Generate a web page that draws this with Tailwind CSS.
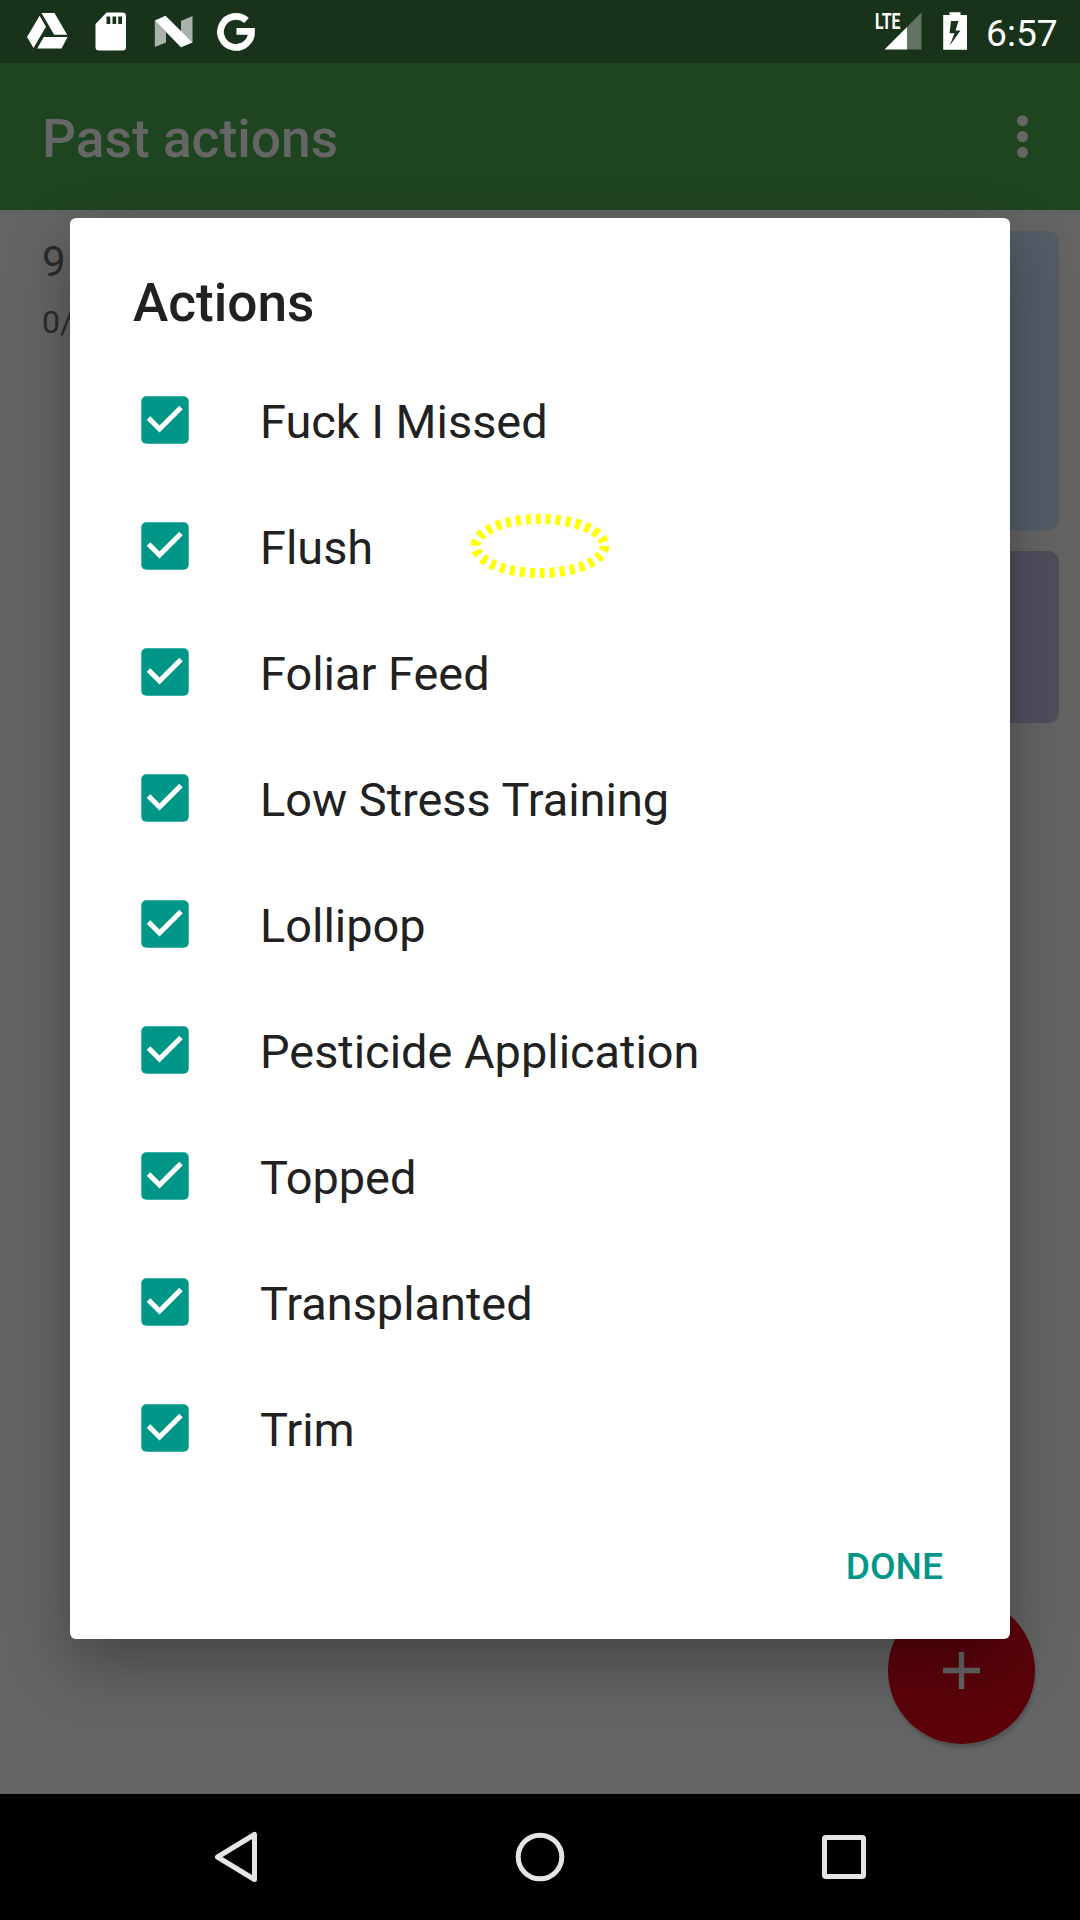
<!DOCTYPE html>
<html lang="en">
<head>
<meta charset="utf-8">
<title>Past actions</title>
<script src="https://cdn.jsdelivr.net/npm/@tailwindcss/browser@4"></script>
</head>
<body class="font-[Roboto,sans-serif]">
<div class="relative flex h-[1920px] w-[1080px] flex-col overflow-hidden bg-[#646464]">
  <!-- Status bar -->
  <header class="flex h-[63px] shrink-0 items-start justify-between bg-[#19321a] text-white">
    <svg class="h-[63px] w-[300px]" viewBox="0 0 300 63" fill="#fff">
      <path d="M41.5 13H54.5L67.2 34.7H54.2ZM39.6 15.7L46 26.7 33.5 48 27 37ZM43.8 37H67.6L61.5 48.4H37.2Z"/>
      <path fill-rule="evenodd" d="M106.500 12.500H122.500Q126 12.500 126 16V47Q126 50.500 122.500 50.500H99Q95.500 50.500 95.500 47V24ZM106.500 16.500V24H110.300V16.500ZM112.500 16.500V24H116.200V16.500ZM118.200 16.500V24H122V16.500Z"/>
      <path opacity=".63" d="M154.800 20.500L166 32V42.500L154.800 47ZM181 21L192.500 16V42.500L181 32Z"/>
      <path d="M154.800 20.500L165.500 15.700 192.500 42.500 181 47.200Z"/>
      <path fill="none" stroke="#fff" stroke-width="6.800" d="M246.500 20.500A15.500 15.500 0 1 0 251.500 31.300H236.500"/>
    </svg>
    <div class="flex">
      <svg class="h-[63px] w-[130px]" viewBox="860 0 130 63" fill="#fff">
        <text x="875" y="29" font-family="Roboto, sans-serif" font-size="22.500" font-weight="700" textLength="25.500" lengthAdjust="spacingAndGlyphs">LTE</text>
        <path d="M884.500 49.500L907 27V49.500Z"/>
        <path opacity=".32" d="M907 27L921.500 12.500V49.500H907Z"/>
        <path fill-rule="evenodd" d="M943.200 15H949.500V12.200H960.500V15H967V49.700H943.200ZM951 21L949.500 33.300H954.500L949.800 45.500 960.500 30.500H955.500L958.500 21Z"/>
      </svg>
      <div class="w-[90px] pt-[12px] text-[37.200px] leading-[43px]"><span class="-ml-[4px]">6:57</span></div>
    </div>
  </header>
  <!-- App bar -->
  <div class="flex h-[147px] shrink-0 items-center justify-between bg-[#1f4420] pr-[52px] pl-[42px]">
    <h1 class="pt-[6px] text-[53.300px] font-medium leading-none text-[#666]">Past actions</h1>
    <svg class="h-[44px] w-[11px]" viewBox="0 0 11 44" fill="#666"><circle cx="5.500" cy="5.700" r="5.500"/><circle cx="5.500" cy="21.500" r="5.500"/><circle cx="5.500" cy="37.300" r="5.500"/></svg>
  </div>
  <!-- Past actions list -->
  <main class="flex h-[1584px] justify-between pt-[21px] pr-[21px] pl-[42px]">
    <div class="text-[#2b2b2b]">
      <div class="mt-[6px] text-[42px] leading-[49px]">9</div>
      <div class="mt-[17px] text-[32px] leading-[38px]">0/15</div>
    </div>
    <div class="flex w-[760px] flex-col gap-[21px]">
      <div class="h-[299px] rounded-[11px] bg-[#535d66]"></div>
      <div class="h-[172px] rounded-[11px] bg-[#524d5b]"></div>
    </div>
  </main>
  <!-- Navigation bar -->
  <nav class="h-[126px] shrink-0 bg-black">
    <svg class="h-[126px] w-[1080px]" viewBox="0 0 1080 126" fill="none" stroke="#e5e5e5" stroke-width="5">
      <path stroke-linejoin="round" d="M217.500 63L254.500 40.500V85.500Z"/>
      <circle cx="540" cy="63" r="21.800"/>
      <rect x="824.500" y="43.500" width="39" height="39" rx="1.500"/>
    </svg>
  </nav>
  <!-- Add button -->
  <div class="absolute top-[1597px] left-[888px] flex size-[147px] items-center justify-center rounded-full bg-[#5c030a] shadow-[1px_4px_3px_rgba(0,0,0,0.17)]">
    <svg class="size-[37px]" viewBox="0 0 37 37" fill="#666"><path d="M15.800 0H21.200V15.800H37V21.200H21.200V37H15.800V21.200H0V15.800H15.800Z"/></svg>
  </div>
  <!-- Dialog -->
  <section class="absolute top-[218px] left-[70px] flex h-[1421px] w-[940px] flex-col rounded-[6px] bg-white text-[#212121] shadow-[0_24px_60px_rgba(0,0,0,0.31)]">
    <h2 class="h-[139px] pt-[54px] pl-[63px] text-[53.200px] font-medium leading-[62px]">Actions</h2>
    <ul id="actions"></ul>
    <div class="flex justify-end pt-[54px] pr-[67px]"><button class="text-[37.200px] font-medium leading-[43px] text-[#009688]">DONE</button></div>
  </section>
  <!-- Focus marker -->
  <svg class="absolute top-[510px] left-[465px] h-[72px] w-[150px]" viewBox="465 510 150 72"><ellipse cx="540" cy="546" rx="64.500" ry="27" fill="none" stroke="#ff0" stroke-width="10" stroke-dasharray="5 5"/></svg>
</div>
<template id="row">
  <li class="flex h-[126px] items-center pl-[71px]">
    <svg class="size-[48px]" viewBox="0 0 48 48"><rect x=".3" y=".3" width="47.400" height="47.400" rx="5" fill="#009688"/><path d="M7.500 22L18.500 33 40 11.500" fill="none" stroke="#fff" stroke-width="5"/></svg>
    <span class="ml-[71px] pt-[5px] text-[46.900px] leading-none"></span>
  </li>
</template>
<script>
const row = document.getElementById('row');
for (const name of ['Fuck I Missed', 'Flush', 'Foliar Feed', 'Low Stress Training', 'Lollipop', 'Pesticide Application', 'Topped', 'Transplanted', 'Trim']) {
  const item = row.content.cloneNode(true);
  item.querySelector('span').textContent = name;
  document.getElementById('actions').append(item);
}
</script>
</body>
</html>
